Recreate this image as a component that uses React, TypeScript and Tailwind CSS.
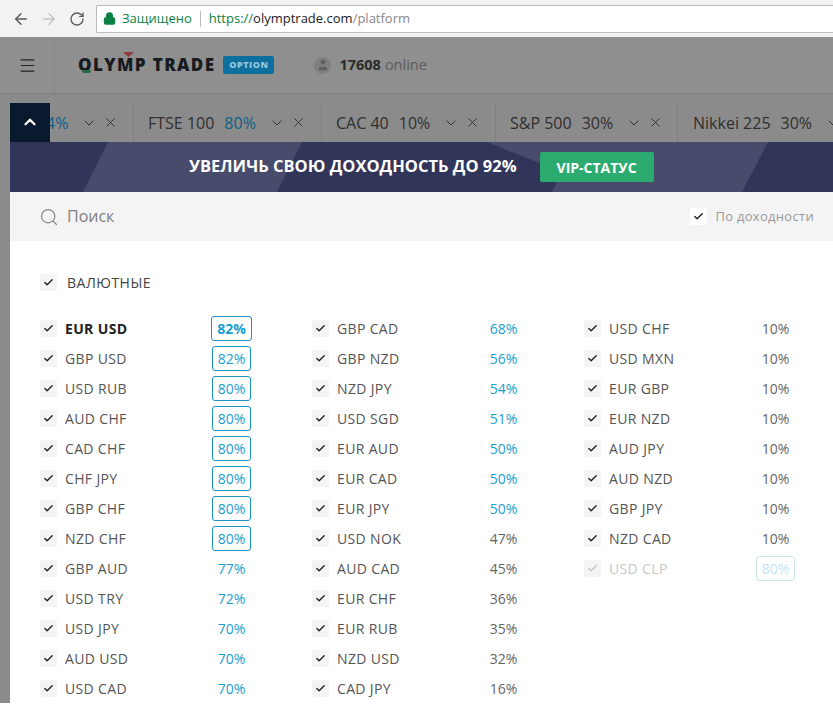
import { ArrowLeft, ArrowRight, Check, ChevronDown, ChevronUp, Lock, Menu, RotateCw, Search, User, X } from 'lucide-react';

interface Pair {
  name: string;
  pct: number;
  bold?: boolean;
  disabled?: boolean;
}

const columns: Pair[][] = [
  [
    { name: 'EUR USD', pct: 82, bold: true },
    { name: 'GBP USD', pct: 82 },
    { name: 'USD RUB', pct: 80 },
    { name: 'AUD CHF', pct: 80 },
    { name: 'CAD CHF', pct: 80 },
    { name: 'CHF JPY', pct: 80 },
    { name: 'GBP CHF', pct: 80 },
    { name: 'NZD CHF', pct: 80 },
    { name: 'GBP AUD', pct: 77 },
    { name: 'USD TRY', pct: 72 },
    { name: 'USD JPY', pct: 70 },
    { name: 'AUD USD', pct: 70 },
    { name: 'USD CAD', pct: 70 },
  ],
  [
    { name: 'GBP CAD', pct: 68 },
    { name: 'GBP NZD', pct: 56 },
    { name: 'NZD JPY', pct: 54 },
    { name: 'USD SGD', pct: 51 },
    { name: 'EUR AUD', pct: 50 },
    { name: 'EUR CAD', pct: 50 },
    { name: 'EUR JPY', pct: 50 },
    { name: 'USD NOK', pct: 47 },
    { name: 'AUD CAD', pct: 45 },
    { name: 'EUR CHF', pct: 36 },
    { name: 'EUR RUB', pct: 35 },
    { name: 'NZD USD', pct: 32 },
    { name: 'CAD JPY', pct: 16 },
  ],
  [
    { name: 'USD CHF', pct: 10 },
    { name: 'USD MXN', pct: 10 },
    { name: 'EUR GBP', pct: 10 },
    { name: 'EUR NZD', pct: 10 },
    { name: 'AUD JPY', pct: 10 },
    { name: 'AUD NZD', pct: 10 },
    { name: 'GBP JPY', pct: 10 },
    { name: 'NZD CAD', pct: 10 },
    { name: 'USD CLP', pct: 80, disabled: true },
  ],
];

const tabs = [
  { name: '', pct: '4%', blue: true, width: 'w-[134px] pl-[46px]' },
  { name: 'FTSE 100', pct: '80%', blue: true, width: 'w-[188px] pl-[14px]' },
  { name: 'CAC 40', pct: '10%', width: 'w-[174px] pl-[14px]' },
  { name: 'S&P 500', pct: '30%', width: 'w-[182px] pl-[14px]' },
  { name: 'Nikkei 225', pct: '30%', width: 'w-[190px] pl-[15px]' },
];

function CheckBox({ className = 'bg-[#f4f4f4]', muted }: { className?: string; muted?: boolean }) {
  return (
    <span className={`flex h-[17px] w-[17px] shrink-0 items-center justify-center rounded-[2px] ${className}`}>
      <Check size={11} strokeWidth={3} className={muted ? 'text-[#c4c4c4]' : 'text-[#222]'} />
    </span>
  );
}

function Percent({ pair }: { pair: Pair }) {
  if (pair.disabled) {
    return (
      <span className="flex h-[25px] w-[39px] items-center justify-center rounded-[3px] border border-[#cfe7f2] text-[#c5e4f2]">
        {pair.pct}%
      </span>
    );
  }
  if (pair.pct >= 80) {
    return (
      <span
        className={`flex h-[25px] items-center justify-center rounded-[3px] border border-[#1c93c0] text-[#1b9ed0] ${
          pair.bold ? 'w-[41px] font-bold' : 'w-[39px]'
        }`}
      >
        {pair.pct}%
      </span>
    );
  }
  return <span className={pair.pct >= 50 ? 'text-[#1b9ed0]' : 'text-[#666]'}>{pair.pct}%</span>;
}

function PairRow({ pair }: { pair: Pair }) {
  return (
    <div className="flex h-[30px] items-center text-[14px]">
      <CheckBox muted={pair.disabled} />
      <span
        className={`ml-[8px] w-[141px] tracking-[0.35px] ${
          pair.disabled ? 'text-[#c8c8c8]' : pair.bold ? 'font-bold text-[#222]' : 'text-[#555]'
        }`}
      >
        {pair.name}
      </span>
      <span className="flex w-[51px] justify-center">
        <Percent pair={pair} />
      </span>
    </div>
  );
}

export default function App() {
  return (
    <div className="h-[727px] w-[833px] overflow-hidden bg-white font-['Open_Sans',sans-serif]">
      {/* browser chrome */}
      <div className="flex h-[37px] items-center bg-[#f2f2f2] pl-[12px]">
        <ArrowLeft size={18} strokeWidth={2} className="text-[#5a5a5a]" />
        <ArrowRight size={18} strokeWidth={2} className="ml-[10px] text-[#c4c4c4]" />
        <RotateCw size={16} strokeWidth={2} className="ml-[11px] text-[#5a5a5a]" />
        <div className="ml-[11px] flex h-[28px] flex-1 items-center rounded-l-[2px] border border-r-0 border-[#bdbdbd] bg-white pl-[6px] text-[13px]">
          <Lock size={13} strokeWidth={3} fill="#0b8043" className="text-[#0b8043]" />
          <span className="ml-[6px] text-[#0b8043]">Защищено</span>
          <span className="mx-[8px] h-[16px] w-px bg-[#bbb]" />
          <span className="text-[#0b8043]">https://</span>
          <span className="text-[#222]">olymptrade.com</span>
          <span className="text-[#888]">/platform</span>
        </div>
      </div>

      {/* site header, dimmed */}
      <div className="flex h-[57px] items-center border-b border-[#808080] bg-[#8f8f8f]">
        <div className="flex h-full w-[55px] items-center justify-center border-r border-[#868686]">
          <Menu size={19} strokeWidth={1.5} className="text-[#222]" />
        </div>
        <span className="relative ml-[23px] text-[17px] font-extrabold tracking-[1.4px] text-[#171b1f]">
          OLYMP TRADE
          <svg className="absolute left-[1px] top-[-3px] h-[28px] w-[60px]" viewBox="0 0 60 28">
            <path d="M3 21 h9 l-1 3 h-7 z" fill="#1f6b45" />
            <path d="M44 3 h11 l-5.5 5 z" fill="#8e3a3a" />
          </svg>
        </span>
        <span className="ml-[8px] flex h-[18px] w-[51px] items-center justify-center rounded-[2px] bg-[#0d6f9d] text-[9px] font-extrabold tracking-[0.6px] text-[#8fc4dc]">
          OPTION
        </span>
        <span className="ml-[40px] flex h-[17px] w-[17px] items-center justify-center overflow-hidden rounded-full bg-[#7f7f7f]">
          <User size={14} fill="#5f5f5f" strokeWidth={0} />
        </span>
        <span className="ml-[8px] text-[14.5px] font-bold text-[#2b2b2b]">17608</span>
        <span className="ml-[4px] text-[14.5px] text-[#5c5c5c]">online</span>
      </div>

      {/* instrument tabs */}
      <div className="relative flex h-[48px] items-end overflow-hidden bg-[#8b8b8b]">
        {tabs.map((tab) => (
          <div
            key={tab.pct + tab.name}
            className={`flex h-[39px] shrink-0 items-center border-r border-[#808080] text-[16px] text-[#2f2f2f] ${tab.width}`}
          >
            {tab.name && <span className="mr-[10px] whitespace-nowrap">{tab.name}</span>}
            <span className={tab.blue ? 'text-[#0f5f85]' : ''}>{tab.pct}</span>
            <ChevronDown size={16} strokeWidth={1.5} className="ml-[13px]" />
            <X size={15} strokeWidth={1.5} className="ml-[6px]" />
          </div>
        ))}
        <div className="absolute bottom-0 left-[10px] flex h-[39px] w-[40px] items-center justify-center bg-[#0a1a2e]">
          <ChevronUp size={18} strokeWidth={3} className="mb-[2px] text-white" />
        </div>
      </div>

      <div className="flex">
        <div className="w-[10px] shrink-0 bg-[#8b8b8b]" />
        <div className="min-w-0 flex-1">
          {/* promo banner */}
          <div className="relative flex h-[50px] items-center bg-[#32355a]">
            <svg className="absolute inset-0 h-full w-full" viewBox="0 0 823 50" preserveAspectRatio="none">
              <polygon points="98,0 292,0 267,50 73,50" fill="#484b6b" />
              <polygon points="477,0 758,0 732,50 542,50 552,30" fill="#484b6b" />
            </svg>
            <span className="relative ml-[179px] pb-[2px] text-[16.5px] font-bold text-white">УВЕЛИЧЬ СВОЮ ДОХОДНОСТЬ ДО 92%</span>
            <span className="relative ml-[23px] flex h-[30px] w-[114px] items-center justify-center rounded-[2px] bg-[#2bab6f] text-[14px] font-bold text-white">
              VIP-СТАТУС
            </span>
          </div>

          {/* search */}
          <div className="flex h-[49px] items-center bg-[#f4f4f4] pl-[29px] pr-[19px]">
            <Search size={20} strokeWidth={1.5} className="text-[#8a8a8a]" />
            <span className="ml-[8px] flex-1 pb-[2px] text-[16px] text-[#808080]">Поиск</span>
            <CheckBox className="ml-[1px] bg-white" />
            <span className="ml-[8px] text-[13px] tracking-[0.3px] text-[#999]">По доходности</span>
          </div>

          {/* pairs */}
          <div className="pl-[30px] pt-[32px]">
            <div className="flex h-[18px] items-center text-[14px] tracking-[0.5px] text-[#444]">
              <CheckBox />
              <span className="ml-[10px]">ВАЛЮТНЫЕ</span>
            </div>
            <div className="mt-[22px] flex">
              {columns.map((col, i) => (
                <div key={i} className="w-[272px] shrink-0">
                  {col.map((pair) => (
                    <PairRow key={pair.name} pair={pair} />
                  ))}
                </div>
              ))}
            </div>
          </div>
        </div>
      </div>
    </div>
  );
}
